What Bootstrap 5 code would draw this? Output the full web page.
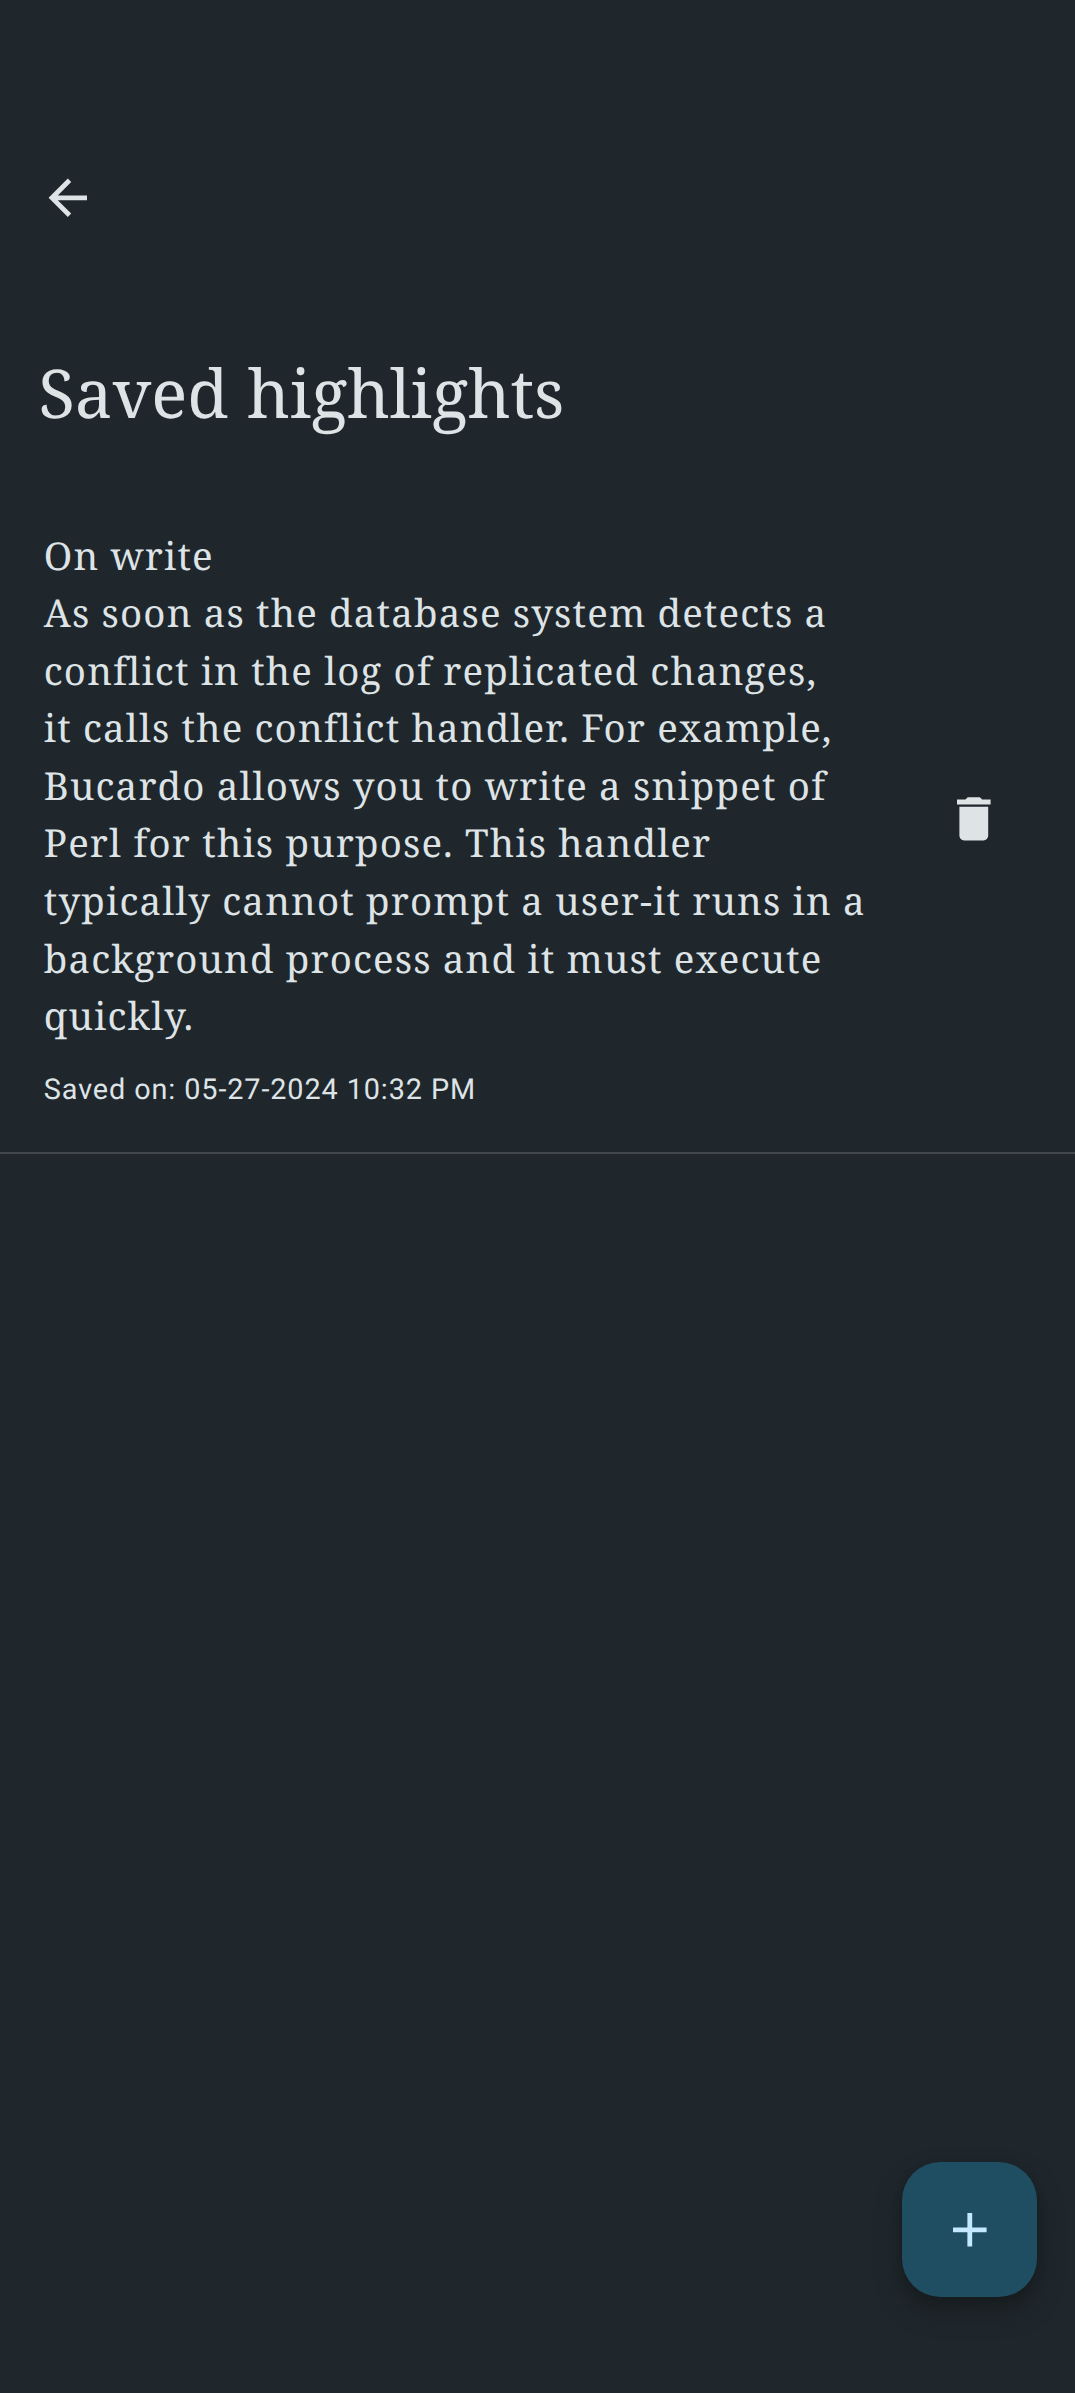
<!DOCTYPE html>
<html lang="en">
<head>
<meta charset="utf-8">
<meta name="viewport" content="width=device-width, initial-scale=1">
<title>Saved highlights</title>
<link href="https://cdn.jsdelivr.net/npm/bootstrap@5.3.0/dist/css/bootstrap.min.css" rel="stylesheet">
<style>
  body { background: #1f272d; color: #dee3e6; font-family: Roboto, sans-serif; text-rendering: geometricPrecision; }
  .screen { height: 2393px; }
  .serif { font-family: "Noto Serif", "DejaVu Serif Condensed", "DejaVu Serif", serif; }
  .topbar { padding: 168.9px 38.6px 0; height: 340px; }
  .icon { width: 57.6px; height: 57.6px; fill: currentColor; display: block; }
  .page-title { font-size: 67.2px; line-height: 86px; letter-spacing: -.1px; word-spacing: 1.5px; padding-left: 38.4px; height: 186px; padding-top: 9px; }
  .entry { height: 628px; padding-left: 43.8px; padding-right: 72.4px; border-bottom: 2px solid #42484b; }
  .quote-text { font-size: 38.4px; line-height: 57.6px; letter-spacing: 1.15px; padding-top: 1.5px; }
  .quote-text span { display: block; white-space: nowrap; }
  .saved-on { font-size: 28.8px; line-height: 38.4px; letter-spacing: .9px; margin-top: 25.5px; }
  .trash { margin-top: 264px; }
  .fab { right: 38.3px; bottom: 96.2px; width: 134.4px; height: 134.4px; border-radius: 38.4px; background: #1f4d61; color: #c4e8ff; box-shadow: 0 14px 24px rgba(20,24,22,.6), 0 3px 10px rgba(20,24,22,.3); }
</style>
</head>
<body>
<main class="screen position-relative overflow-hidden">
  <header class="topbar">
    <button class="btn p-0 border-0 text-reset" aria-label="Back">
      <svg class="icon" viewBox="0 0 24 24"><path d="M20 11H7.83l5.59-5.59L12 4l-8 8 8 8 1.41-1.41L7.83 13H20v-2z"/></svg>
    </button>
  </header>
  <h1 class="page-title serif fw-normal mb-0">Saved highlights</h1>
  <article class="entry d-flex justify-content-between align-items-start">
    <div>
      <div class="quote-text serif">
        <span>On write</span>
        <span>As soon as the database system detects a</span>
        <span>conflict in the log of replicated changes,</span>
        <span>it calls the conflict handler. For example,</span>
        <span>Bucardo allows you to write a snippet of</span>
        <span>Perl for this purpose. This handler</span>
        <span>typically cannot prompt a user-it runs in a</span>
        <span>background process and it must execute</span>
        <span>quickly.</span>
      </div>
      <div class="saved-on">Saved on: 05-27-2024 10:32 PM</div>
    </div>
    <button class="btn p-0 border-0 text-reset trash" aria-label="Delete">
      <svg class="icon" viewBox="0 0 24 24"><path d="M6 19c0 1.1.9 2 2 2h8c1.1 0 2-.9 2-2V7H6v12zM19 4h-3.5l-1-1h-5l-1 1H5v2h14V4z"/></svg>
    </button>
  </article>
  <button class="fab btn border-0 p-0 position-absolute d-flex align-items-center justify-content-center" aria-label="Add">
    <svg class="icon" viewBox="0 0 24 24"><path d="M19 13h-6v6h-2v-6H5v-2h6V5h2v6h6v2z"/></svg>
  </button>
</main>
<script src="https://cdn.jsdelivr.net/npm/bootstrap@5.3.0/dist/js/bootstrap.bundle.min.js"></script>
</body>
</html>
